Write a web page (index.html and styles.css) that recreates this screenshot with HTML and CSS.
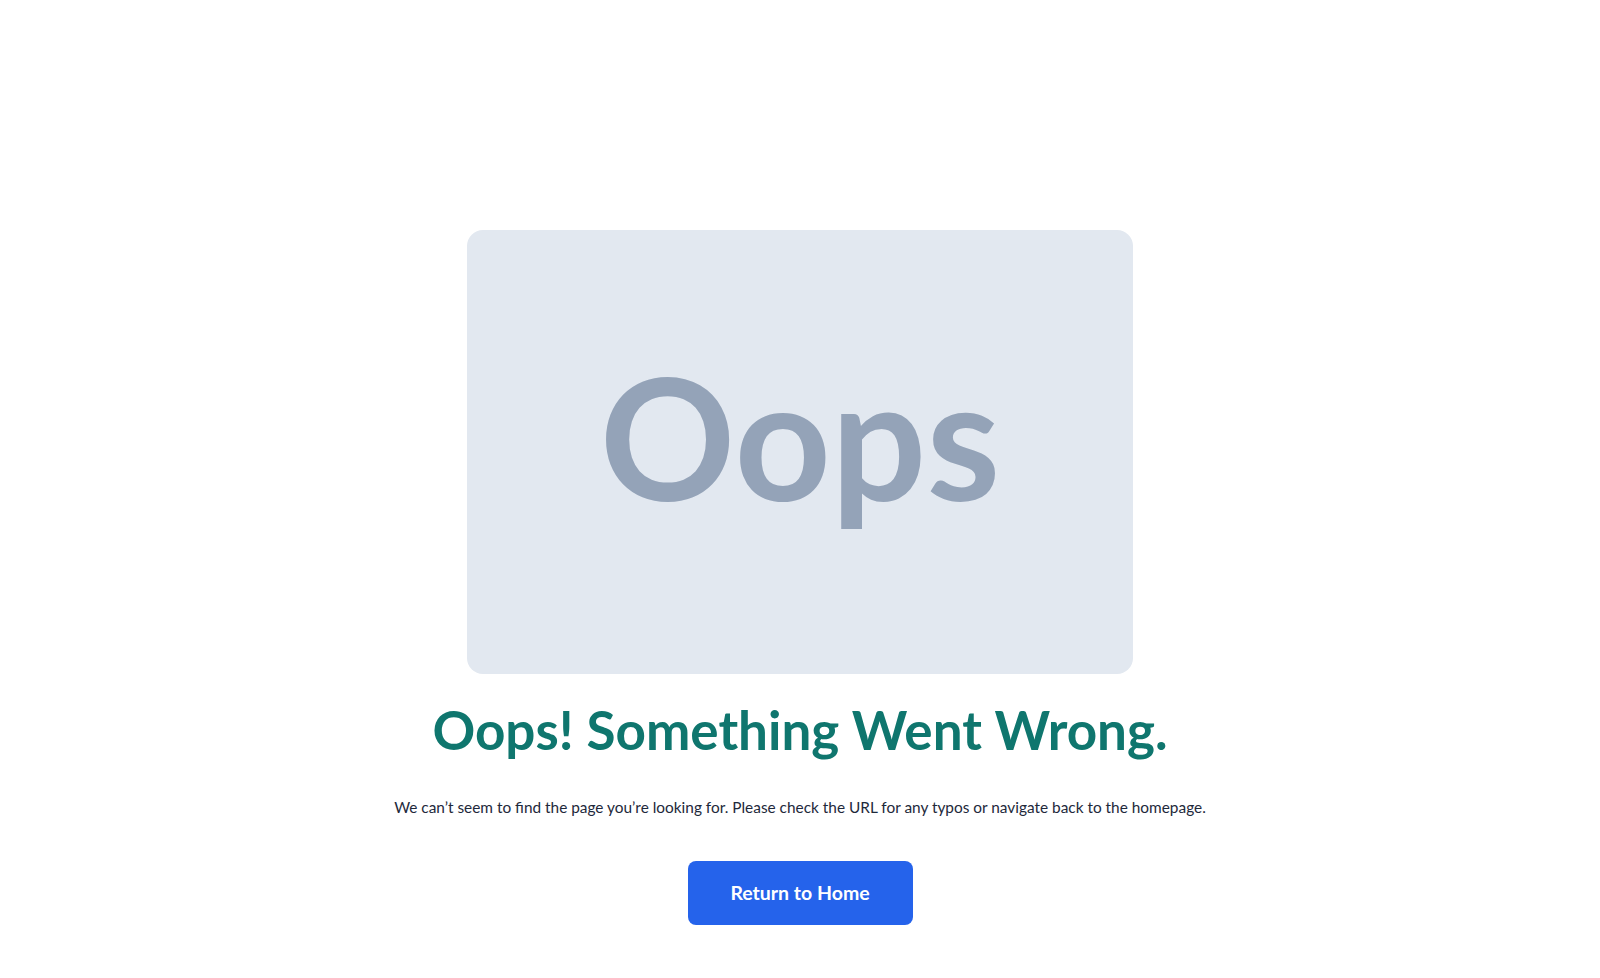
FILE: index.html
```html
<!DOCTYPE html>
<html lang="en">

<head>
    <meta charset="UTF-8">
    <meta name="viewport" content="width=device-width, initial-scale=1.0">
    <title>Page Not Found</title>
    <link rel="stylesheet" href="styles.css">
</head>

<body>
    <main class="notFound">
        <div class="placeholder">
            <span>Oops</span>
        </div>
        <h1>Oops! Something Went Wrong.</h1>
        <p>We can’t seem to find the page you’re looking for. Please check the URL for any typos or navigate back to the homepage.</p>
        <a href="index.html" class="homeButton">Return to Home</a>
    </main>
</body>

</html>
```

FILE: styles.css
```css
body {
    margin: 0;
    font-family: Lato, "Open Sans", sans-serif;
    background-color: #ffffff;
    color: #1e293b;
}

.notFound {
    display: flex;
    flex-direction: column;
    align-items: center;
    padding-top: 230px;
    text-align: center;
}

.placeholder {
    width: 666px;
    height: 444px;
    background: #e2e8f0;
    border-radius: 16px;
    display: flex;
    align-items: center;
    justify-content: center;
}

.placeholder span {
    font-family: Lato, sans-serif;
    font-weight: 700;
    font-size: 168px;
    line-height: 1;
    color: #94a3b8;
    /* text sits a little above the middle */
    margin-bottom: 32px;
}

h1 {
    color: #0f766e;
    font-size: 53px;
    font-weight: 700;
    line-height: 1.2;
    margin: 24px 0 0;
}

p {
    font-size: 15.4px;
    margin: 36px 0 0;
}

.homeButton {
    display: inline-block;
    margin-top: 45px;
    width: 225px;
    box-sizing: border-box;
    padding: 18px 0;
    background: #2563eb;
    color: white;
    text-decoration: none;
    font-size: 19.5px;
    font-weight: 700;
    line-height: 28px;
    border-radius: 8px;
}
```
